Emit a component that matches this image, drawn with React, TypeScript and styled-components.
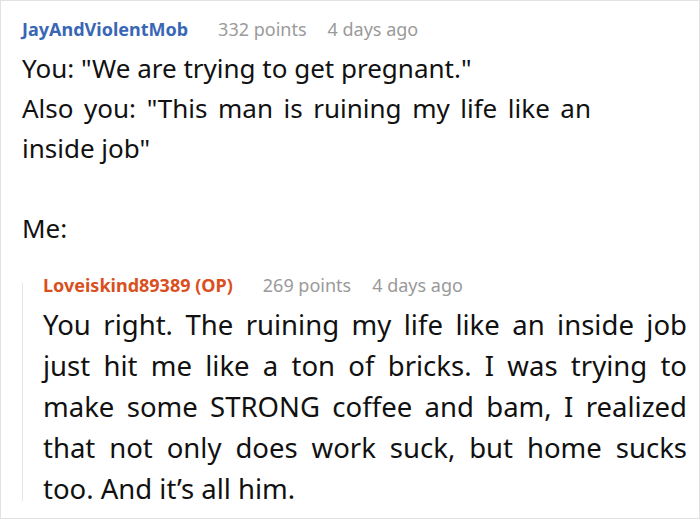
import styled, { createGlobalStyle } from 'styled-components';

const GlobalStyle = createGlobalStyle`
  html, body {
    margin: 0;
    padding: 0;
    background: #fff;
  }
  body {
    font-family: 'Noto Sans', 'Open Sans', sans-serif;
    color: #111;
  }
`;

export default function App() {
  return (
    <>
      <GlobalStyle />
      <S.Frame>
        <S.Comment>
          <S.Meta>
            <S.Author>JayAndViolentMob</S.Author>
            <S.Info>332 points</S.Info>
            <S.Info>4 days ago</S.Info>
          </S.Meta>
          <S.Body width={569} size={26}>
            You: "We are trying to get pregnant."
            <br />
            Also you: "This man is ruining my life like an inside job"
            <br />
            <br />
            Me:
          </S.Body>
          <S.Reply>
            <S.Meta>
              <S.Author isOp>Loveiskind89389 (OP)</S.Author>
              <S.Info>269 points</S.Info>
              <S.Info>4 days ago</S.Info>
            </S.Meta>
            <S.Body width={644} size={27.5} lineHeight={41}>
              You right. The ruining my life like an inside job just hit me like a ton of bricks. I
              was trying to make some STRONG coffee and bam, I realized that not only does work
              suck, but home sucks too. And it’s all him.
            </S.Body>
          </S.Reply>
        </S.Comment>
      </S.Frame>
    </>
  );
}

const S = {
  Frame: styled.div`
    width: 700px;
    height: 519px;
    box-sizing: border-box;
    border: 1px solid #e2e2e2;
    overflow: hidden;
  `,
  Comment: styled.div`
    padding: 13px 0 0 21px;
  `,
  Meta: styled.div`
    display: flex;
    align-items: baseline;
    gap: 21px;
    margin-bottom: 4px;
    font-size: 18px;
    line-height: 30px;
  `,
  Author: styled.span<{ isOp?: boolean }>`
    margin-right: 9px;
    font-weight: 700;
    color: ${({ isOp }) => (isOp ? '#d9501e' : '#3a66b6')};
  `,
  Info: styled.span`
    color: #9a9a9a;
  `,
  Body: styled.div<{ width: number; size: number; lineHeight?: number }>`
    max-width: ${({ width }) => width}px;
    font-size: ${({ size }) => size}px;
    line-height: ${({ lineHeight = 40 }) => lineHeight}px;
    text-align: justify;
  `,
  Reply: styled.div`
    position: relative;
    margin-top: 22px;
    padding-left: 21px;

    &::before {
      content: '';
      position: absolute;
      left: 0;
      top: 13px;
      bottom: 8px;
      width: 1px;
      background: #e6e6e6;
    }
  `,
};
